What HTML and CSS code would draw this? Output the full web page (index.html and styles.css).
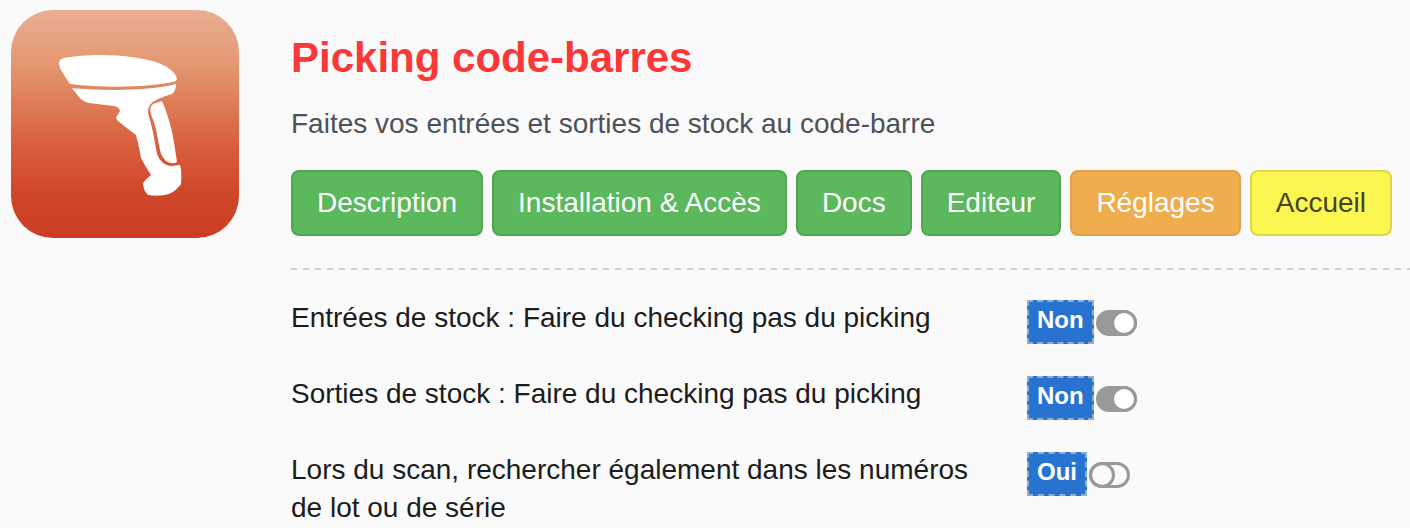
FILE: index.html
```html
<!DOCTYPE html>
<html lang="fr">
<head>
    <meta charset="UTF-8">
    <title>Picking code-barres</title>
    <link rel="stylesheet" href="styles.css">
</head>
<body>
    <div class="module">
        <svg class="module-icon" viewBox="0 0 228 228" aria-hidden="true">
            <defs>
                <linearGradient id="fond" x1="0" y1="0" x2="0" y2="1">
                    <stop offset="0" stop-color="#e8ae94"/>
                    <stop offset="0.25" stop-color="#e4966f"/>
                    <stop offset="0.58" stop-color="#d9603f"/>
                    <stop offset="0.8" stop-color="#cf472a"/>
                    <stop offset="1" stop-color="#ca3d22"/>
                </linearGradient>
            </defs>
            <rect width="228" height="228" rx="42" fill="url(#fond)"/>
            <g fill="#fff">
                <path d="M48 53Q48 49 53 48C80 43 125 44 150 54Q164 60 166 69L165 71C140 78 90 78 59 74Q54 67 49 58Z"/>
                <path d="M61 78C90 81 140 81 165 74Q165 81 161 84Q154 86 147 89Q136 94 137 103C142 120 144 132 146 144Q150 155 160 156L169 155Q171 160 170 174Q165 181 158 184Q148 187 137 185Q132 180 132 173Q135 169 140 165Q134 156 130 148L127 133L125 125Q113 116 107 111Q104 108 106 106L109 101Q108 97 103 96L78 93Q71 91 68 87Z"/>
                <path d="M151 91Q160 112 163 132L166 152Q161 155 155 151Q150 146 149 140C146 125 145 116 141 107Q137 98 142 94Z"/>
            </g>
        </svg>

        <div class="content">
            <h1>Picking code-barres</h1>
            <p class="intro">Faites vos entrées et sorties de stock au code-barre</p>

            <nav class="tabs">
                <a href="#description" class="btn btn-success">Description</a>
                <a href="#installation" class="btn btn-success">Installation &amp; Accès</a>
                <a href="#docs" class="btn btn-success">Docs</a>
                <a href="#editeur" class="btn btn-success">Editeur</a>
                <a href="#reglages" class="btn btn-warning">Réglages</a>
                <a href="#accueil" class="btn btn-home">Accueil</a>
            </nav>

            <form class="settings">
                <div class="setting">
                    <label for="entrees">Entrées de stock : Faire du checking pas du picking</label>
                    <div class="value">
                        <span class="badge">Non</span>
                        <input type="checkbox" id="entrees" class="toggle" checked>
                    </div>
                </div>
                <div class="setting">
                    <label for="sorties">Sorties de stock : Faire du checking pas du picking</label>
                    <div class="value">
                        <span class="badge">Non</span>
                        <input type="checkbox" id="sorties" class="toggle" checked>
                    </div>
                </div>
                <div class="setting">
                    <label for="lots">Lors du scan, rechercher également dans les numéros de lot ou de série</label>
                    <div class="value">
                        <span class="badge">Oui</span>
                        <input type="checkbox" id="lots" class="toggle">
                    </div>
                </div>
            </form>
        </div>
    </div>
</body>
</html>
```
FILE: styles.css
```css
body { margin: 0; background: #fafafa; color: #1c1c1c; font-family: "Liberation Sans", Arial, sans-serif; font-size: 28px; line-height: 38px; }

.module { display: flex; align-items: flex-start; gap: 52px; padding: 10px 0 0 11px; }
.module-icon { width: 228px; height: 228px; flex: none; }
.content { flex: 1; min-width: 0; }

h1 { margin: 24px 0 0; color: #fc3737; font-size: 42px; line-height: 48px; }
.intro { margin: 23px 0 27px; color: #4d5158; }

.tabs { display: flex; gap: 9px; padding-bottom: 34px; background: repeating-linear-gradient(90deg, #d0d0d0 0 6px, transparent 6px 12px) left bottom / 100% 2px no-repeat; }
.btn { padding: 12px 24px; border: 2px solid; border-radius: 8px; color: #fff; text-decoration: none; white-space: nowrap; }
.btn-success { background: #5cb85c; border-color: #52a653; }
.btn-warning { background: #f0ad4e; border-color: #e2a04c; }
.btn-home { background: #fbf650; border-color: #dbd746; color: #45421f; }

.settings { display: flex; flex-direction: column; gap: 31px; padding-top: 29px; }
.setting { display: grid; grid-template-columns: 736px 1fr; align-items: start; }
.setting label { padding-right: 32px; }
.value { display: flex; align-items: center; gap: 2px; padding-top: 1px; }
.badge { padding: 0 8px 4px; border: 2px dashed #8fb0c8; background: #2773cf; color: #fff; font-size: 24px; font-weight: bold; line-height: 36px; }

.toggle { appearance: none; display: flex; box-sizing: border-box; width: 41px; height: 26px; margin: 2px 0 0; border: 3px solid #999; border-radius: 13px; cursor: pointer; }
.toggle::before { content: ""; box-sizing: border-box; width: 26px; height: 26px; margin: -3px; border: 3px solid #999; border-radius: 50%; }
.toggle:checked { justify-content: flex-end; background: #999; }
.toggle:checked::before { background: #fff; }
```
